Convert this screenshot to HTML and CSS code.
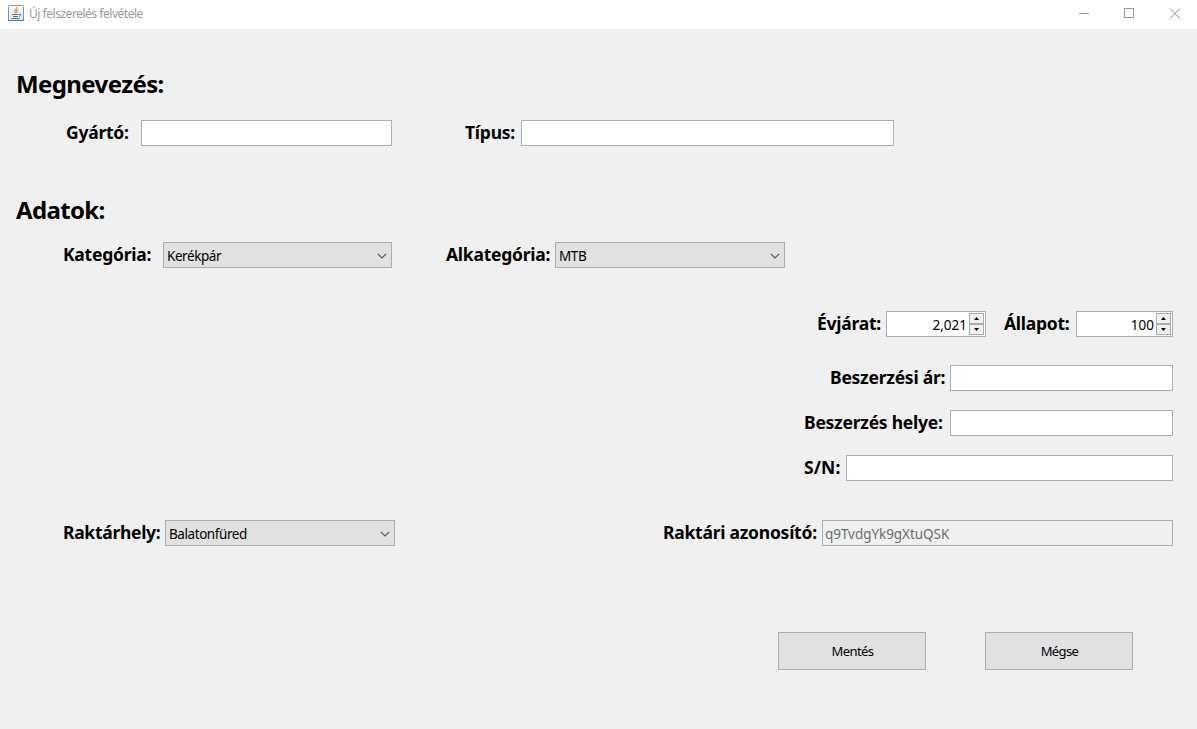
FILE: index.html
```html
<!DOCTYPE html>
<html lang="hu">
<head>
<meta charset="utf-8">
<title>Új felszerelés felvétele</title>
<link rel="stylesheet" href="styles.css">
</head>
<body>
<header class="titlebar">
  <svg class="java" width="16" height="16" viewBox="0 0 16 16">
    <defs><linearGradient id="g" x2="0" y2="1"><stop stop-color="#fff"/><stop offset="1" stop-color="#dce3e9"/></linearGradient></defs>
    <rect x=".5" y=".5" width="15" height="15" rx="1" fill="url(#g)" stroke="#7d98ac"/>
    <path d="M.5 14v1.500h15V14" fill="none" stroke="#557791"/>
    <path d="M9 2.200c.3 2-2.800 2.300-2.300 4.200L8 8.300M10.300 4.500C8.300 5.300 8 6 9 7.200v.8" fill="none" stroke="#ec812c" stroke-width="1.100"/>
    <path d="M4 9.500h6.500M5 11.500h5M3.500 13.500h8M11 9.300c2.500-.8 2.500 1.500 0 2.200" fill="none" stroke="#50789b"/>
  </svg>
  <span class="caption">Új felszerelés felvétele</span>
  <svg class="controls" width="102" height="11" viewBox="0 0 102 11" fill="none" stroke="#999" shape-rendering="crispEdges">
    <path d="M0 5.500h10M45.500.500h9v9h-9z"/>
    <path d="M91 .5l10 10M101 .5l-10 10" stroke="#888" shape-rendering="auto"/>
  </svg>
</header>
<main class="form">
  <h1 class="heading naming">Megnevezés:</h1>
  <div class="row maker">
    <label class="label l-maker"><span>Gyártó:</span></label><div class="field w-maker"></div>
    <label class="label l-type"><span>Típus:</span></label><div class="field w-type"></div>
  </div>
  <h1 class="heading data">Adatok:</h1>
  <div class="row category">
    <label class="label l-cat"><span>Kategória:</span></label>
    <div class="field combo w-cat"><span class="t-cat">Kerékpár</span><svg class="chevron" width="10" height="6" viewBox="0 0 10 6"><path d="M.8.8L5 5L9.200.8"/></svg></div>
    <label class="label l-sub"><span>Alkategória:</span></label>
    <div class="field combo w-combo"><span class="t-sub">MTB</span><svg class="chevron" width="10" height="6" viewBox="0 0 10 6"><path d="M.8.8L5 5L9.200.8"/></svg></div>
  </div>
  <div class="row right year">
    <label class="label l-year"><span>Évjárat:</span></label>
    <div class="field spinner w-year"><span class="t-year">2,021</span><div class="steps"><i class="step"><svg width="5" height="3"><path d="M0 3h5L2.500 0z"/></svg></i><i class="step"><svg width="5" height="3"><path d="M0 0h5L2.500 3z"/></svg></i></div></div>
    <label class="label l-state"><span>Állapot:</span></label>
    <div class="field spinner w-state"><span class="t-state">100</span><div class="steps"><i class="step"><svg width="5" height="3"><path d="M0 3h5L2.500 0z"/></svg></i><i class="step"><svg width="5" height="3"><path d="M0 0h5L2.500 3z"/></svg></i></div></div>
  </div>
  <div class="row right price"><label class="label l-price"><span>Beszerzési ár:</span></label><div class="field w-price"></div></div>
  <div class="row right place"><label class="label l-place"><span>Beszerzés helye:</span></label><div class="field w-price"></div></div>
  <div class="row right serial"><label class="label l-serial"><span>S/N:</span></label><div class="field w-serial"></div></div>
  <div class="row storage">
    <label class="label l-store"><span>Raktárhely:</span></label>
    <div class="field combo w-combo"><span class="t-store">Balatonfüred</span><svg class="chevron" width="10" height="6" viewBox="0 0 10 6"><path d="M.8.8L5 5L9.200.8"/></svg></div>
    <label class="label l-id"><span>Raktári azonosító:</span></label>
    <div class="field disabled w-id"><span class="t-id">q9TvdgYk9gXtuQSK</span></div>
  </div>
  <div class="actions"><button class="button b-save">Mentés</button><button class="button b-cancel">Mégse</button></div>
</main>
</body>
</html>
```
FILE: styles.css
```css
* { box-sizing: border-box; }
body { margin: 0; width: 1197px; height: 729px; overflow: hidden; background: #f0f0f0; color: #000; font-family: "Noto Sans", "Open Sans", sans-serif; }
.titlebar { display: flex; align-items: flex-start; height: 29px; padding: 5px 16px 0 8px; background: #fff; }
.java { flex: none; }
.caption { margin-left: 5px; font-size: 12px; line-height: 18px; letter-spacing: -.47px; color: #999; white-space: nowrap; }
.controls { flex: none; margin: 3px 0 0 auto; }
.form { display: flex; flex-direction: column; height: 700px; }
.heading { margin: 0 0 0 16px; height: 34px; font-size: 24px; line-height: 34px; font-weight: 700; white-space: nowrap; }
.naming { margin-top: 38px; letter-spacing: -.6px; }
.data { margin-top: 47px; letter-spacing: -.65px; }
.row { display: flex; flex: none; height: 26px; padding-right: 24px; }
.right { justify-content: flex-end; }
.maker { margin-top: 19px; }
.category { margin-top: 15px; }
.year { margin-top: 43px; }
.price { margin-top: 28px; }
.place, .serial { margin-top: 19px; }
.storage { margin-top: 39px; }
.label { flex: none; font-size: 17.500px; line-height: 25px; font-weight: 700; letter-spacing: -.25px; white-space: nowrap; }
.l-maker { margin-left: 66px; width: 75px; }
.l-type { margin-left: 73px; width: 56px; }
.l-cat { margin-left: 63px; width: 100px; }
.l-sub { margin-left: 54px; width: 109px; }
.l-year { width: 69px; }
.l-state { margin-left: 18px; width: 72px; }
.l-price { width: 120px; }
.l-place { width: 146px; }
.l-serial { width: 42px; letter-spacing: .1px; }
.l-store { margin-left: 63px; width: 102px; letter-spacing: -.3px; }
.l-id { margin-left: 268px; width: 159px; }
.field { display: flex; flex: none; height: 26px; border: 1px solid #abadb3; background: #fff; font-size: 13.500px; line-height: 26px; white-space: nowrap; }
.w-maker { width: 251px; }
.w-type { width: 373px; }
.w-cat { width: 229px; }
.w-combo { width: 230px; }
.w-year { width: 100px; }
.w-state { width: 97px; }
.w-price { width: 223px; }
.w-serial { width: 327px; }
.w-id { width: 351px; }
.combo { justify-content: space-between; padding: 0 4px 0 3px; border-color: #adadad; background: #e1e1e1; letter-spacing: -.43px; }
.chevron { margin-top: 10px; fill: none; stroke: #555; stroke-width: 1.200; }
.spinner { justify-content: flex-end; padding: 1px 1px 0 0; }
.spinner > span { margin-right: 2px; letter-spacing: 0; line-height: 24px; }
.steps { display: flex; flex-direction: column; width: 15px; height: 22px; }
.step { display: flex; align-items: center; justify-content: center; height: 11px; border: 1px solid #acacac; background: #f0f0f0; }
.disabled { padding-left: 2px; background: #f0f0f0; color: #6d6d6d; letter-spacing: -.05px; }
.actions { display: flex; flex: none; gap: 59px; margin: 86px 0 0 778px; }
.button { width: 148px; height: 38px; padding: 0 0 0 1px; border: 1px solid #adadad; background: #e1e1e1; color: #000; font: 13px/36px "Noto Sans", "Open Sans", sans-serif; letter-spacing: -.6px; }
```
